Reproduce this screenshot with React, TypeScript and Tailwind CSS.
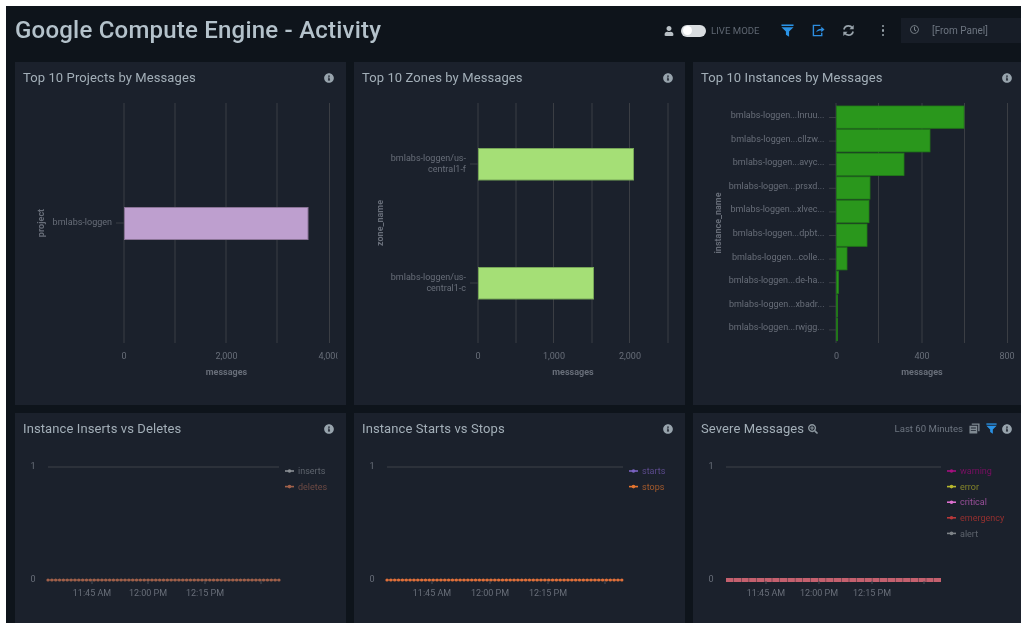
import React from "react";
import { FaInfoCircle, FaUser, FaSearchPlus, FaRegClock } from "react-icons/fa";

const LABEL = "#686e79";
const GRID = "#3b3e44";
const FONT = "Roboto, sans-serif";

function Info() {
  return <FaInfoCircle className="h-[10px] w-[10px] text-[#98a4ad]" />;
}

function Funnel({ className }: { className: string }) {
  return (
    <svg viewBox="0 0 14 14" className={className} fill="currentColor">
      <path d="M0.5 0.5H13.5V2.2H0.5Z" />
      <path d="M0.5 3.4H13.5L8.7 8.2V13.6L5.3 11.6V8.2Z" />
    </svg>
  );
}

function Panel({ title, right, children }: { title: React.ReactNode; right?: React.ReactNode; children: React.ReactNode }) {
  return (
    <div className="flex min-w-0 flex-col overflow-hidden bg-[#1b212c]">
      <div className="flex h-[32px] shrink-0 items-center justify-between pl-[8px] pr-[12px]">
        <div className="flex items-center text-[13px] tracking-[0.1px] text-[#a3afb8]">{title}</div>
        {right ?? <Info />}
      </div>
      {children}
    </div>
  );
}

type Box = { x: number; y: number; w: number; h: number };

function Chart({ box, children }: { box: Box; children: React.ReactNode }) {
  return (
    <svg
      width={box.w}
      height={box.h}
      viewBox={`${box.x} ${box.y} ${box.w} ${box.h}`}
      className="block shrink-0"
      style={{ fontFamily: FONT }}
    >
      {children}
    </svg>
  );
}

function Grid({ xs }: { xs: number[] }) {
  return (
    <>
      {xs.map((x) => (
        <line key={x} x1={x} x2={x} y1={103} y2={343} stroke={GRID} strokeWidth={1} />
      ))}
    </>
  );
}

function Tx({ x, y, anchor = "end", children, bold, fill = LABEL }: { x: number; y: number; anchor?: "start" | "middle" | "end"; children: React.ReactNode; bold?: boolean; fill?: string }) {
  return (
    <text x={x} y={y} textAnchor={anchor} fontSize={9} fontWeight={bold ? 700 : 400} fill={fill}>
      {children}
    </text>
  );
}

function YTitle({ x, y, children }: { x: number; y: number; children: React.ReactNode }) {
  return (
    <text transform={`translate(${x} ${y}) rotate(-90)`} textAnchor="middle" fontSize={9} fontWeight={700} fill={LABEL}>
      {children}
    </text>
  );
}

const INSTANCES: [string, number][] = [
  ["bmlabs-loggen...lnruu...", 964],
  ["bmlabs-loggen...cllzw...", 930],
  ["bmlabs-loggen...avyc...", 904],
  ["bmlabs-loggen...prsxd...", 870],
  ["bmlabs-loggen...xlvec...", 869],
  ["bmlabs-loggen...dpbt...", 867],
  ["bmlabs-loggen...colle...", 847],
  ["bmlabs-loggen...de-ha...", 838.5],
  ["bmlabs-loggen...xbadr...", 837.6],
  ["bmlabs-loggen...rwjgg...", 837.6],
];

function Projects() {
  return (
    <Chart box={{ x: 15, y: 94, w: 331, h: 311 }}>
      <defs>
        <clipPath id="clipProjects">
          <rect x={15} y={94} width={322.5} height={311} />
        </clipPath>
      </defs>
      <Grid xs={[124, 175, 226, 277, 329.5]} />
      <rect x={124.5} y={207.5} width={183.5} height={32} fill="#be9fcf" stroke="#8a7396" />
      <line x1={116} x2={124} y1={223} y2={223} stroke={GRID} />
      <Tx x={112} y={225}>bmlabs-loggen</Tx>
      <YTitle x={44} y={223}>project</YTitle>
      <Tx x={124} y={358.5} anchor="middle">0</Tx>
      <Tx x={226.5} y={358.5} anchor="middle">2,000</Tx>
      <g clipPath="url(#clipProjects)">
        <Tx x={329.5} y={358.5} anchor="middle">4,000</Tx>
      </g>
      <Tx x={226.5} y={375} anchor="middle" bold>messages</Tx>
    </Chart>
  );
}

function Zones() {
  return (
    <Chart box={{ x: 354, y: 94, w: 331, h: 311 }}>
      <Grid xs={[478, 516, 553.5, 592, 629.5, 668]} />
      <rect x={478.5} y={148.5} width={155} height={31.5} fill="#a5df76" stroke="#76a558" />
      <rect x={478.5} y={267.5} width={115} height={31.5} fill="#a5df76" stroke="#76a558" />
      <line x1={470} x2={478} y1={164} y2={164} stroke={GRID} />
      <line x1={470} x2={478} y1={283} y2={283} stroke={GRID} />
      <Tx x={466} y={161}>bmlabs-loggen/us-</Tx>
      <Tx x={466} y={171.5}>central1-f</Tx>
      <Tx x={466} y={279.5}>bmlabs-loggen/us-</Tx>
      <Tx x={466} y={290.5}>central1-c</Tx>
      <YTitle x={383} y={223}>zone_name</YTitle>
      <Tx x={478} y={358.5} anchor="middle">0</Tx>
      <Tx x={554} y={358.5} anchor="middle">1,000</Tx>
      <Tx x={630} y={358.5} anchor="middle">2,000</Tx>
      <Tx x={573} y={375} anchor="middle" bold>messages</Tx>
    </Chart>
  );
}

function Instances() {
  return (
    <Chart box={{ x: 693, y: 94, w: 331, h: 311 }}>
      <Grid xs={[836, 878.5, 922, 964.5, 1007.5]} />
      {INSTANCES.map(([name, end], i) => {
        const y = 106 + i * 23.6;
        return (
          <g key={name}>
            <rect x={836.5} y={y} width={end - 836.5} height={22.3} fill="#2a971c" stroke="#217a18" strokeWidth={0.8} />
            <line x1={829} x2={836} y1={y + 11.5} y2={y + 11.5} stroke={GRID} />
            <Tx x={824.5} y={y + 12}>{name}</Tx>
          </g>
        );
      })}
      <YTitle x={721} y={223}>instance_name</YTitle>
      <Tx x={836.5} y={358.5} anchor="middle">0</Tx>
      <Tx x={922} y={358.5} anchor="middle">400</Tx>
      <Tx x={1007} y={358.5} anchor="middle">800</Tx>
      <Tx x={922} y={375} anchor="middle" bold>messages</Tx>
    </Chart>
  );
}

type Legend = { name: string; text: string; mark: string };

function Timeline({
  box, x1, x2, oneX, ticks, legendX, legend, series,
}: {
  box: Box; x1: number; x2: number; oneX: number; ticks: number[]; legendX: number; legend: Legend[]; series: React.ReactNode;
}) {
  return (
    <Chart box={box}>
      <line x1={x1} x2={x2} y1={467} y2={467} stroke="#3f4349" />
      <Tx x={oneX} y={468.5} anchor="middle">1</Tx>
      <Tx x={oneX} y={581.5} anchor="middle">0</Tx>
      {series}
      {ticks.map((t) => (
        <line key={t} x1={t} x2={t} y1={581} y2={584} stroke="#4c5058" />
      ))}
      {["11:45 AM", "12:00 PM", "12:15 PM"].map((t, i) => (
        <Tx key={t} x={ticks[i]} y={595.5} anchor="middle">{t}</Tx>
      ))}
      {legend.map((l, i) => {
        const y = 471 + i * 15.6;
        return (
          <g key={l.name}>
            <line x1={legendX} x2={legendX + 9} y1={y} y2={y} stroke={l.mark} strokeWidth={1.6} />
            <circle cx={legendX + 4.5} cy={y} r={1.8} fill={l.mark} />
            <Tx x={legendX + 13} y={y + 3.2} anchor="start" fill={l.text}>{l.name}</Tx>
          </g>
        );
      })}
    </Chart>
  );
}

function Dots({ x1, x2, color, step = 3.85 }: { x1: number; x2: number; color: string; step?: number }) {
  const n = Math.floor((x2 - x1) / step);
  return (
    <g>
      <line x1={x1} x2={x2} y1={580} y2={580} stroke={color} strokeWidth={1.2} />
      {Array.from({ length: n + 1 }, (_, i) => (
        <circle key={i} cx={x1 + i * step} cy={580} r={1.6} fill={color} />
      ))}
    </g>
  );
}

export default function App() {
  return (
    <div className="h-[626px] w-[1024px] overflow-hidden bg-white pl-[6px] pt-[6px]">
      <div
        className="h-[617px] w-[1015px] overflow-hidden bg-[#0e141b] blur-[0.6px]"
        style={{ fontFamily: FONT }}
      >
        <header className="flex h-[56px] items-center pb-[7px] pl-[9px]">
          <h1 className="-mt-[1px] text-[24px] font-medium tracking-[0.22px] text-[#b4c2cb]">Google Compute Engine - Activity</h1>
          <div className="ml-auto flex items-center">
            <FaUser className="h-[10px] w-[10px] text-[#b9c1c6]" />
            <div className="ml-[7px] flex h-[12px] w-[25px] items-center rounded-full bg-[#d9dde0] pl-[2px]">
              <div className="h-[9px] w-[9px] rounded-full bg-white" />
            </div>
            <span className="ml-[5px] mt-[1px] text-[9.6px] text-[#5f6772]">LIVE MODE</span>
            <Funnel className="ml-[21px] h-[13px] w-[13px] text-[#2a93e6]" />
            <svg viewBox="0 0 14 14" className="ml-[18px] h-[13px] w-[13px] text-[#2d8ee0]" fill="none" stroke="currentColor" strokeWidth={1.5}>
              <path d="M9 1.5H1.5V12.5H10.5V9.5" />
              <path d="M4.5 9C5 6.2 7 5 10 5V3L13.5 6L10 9V7C7.8 7 6 7.5 4.5 9Z" fill="currentColor" stroke="none" />
            </svg>
            <svg viewBox="0 0 14 14" className="ml-[17px] h-[13px] w-[13px] text-[#98a3ab]" fill="none" stroke="currentColor" strokeWidth={1.8}>
              <path d="M2 6C2.6 3.6 4.6 2 7 2C8.7 2 10.2 2.8 11.2 4.2" />
              <path d="M12 8C11.4 10.4 9.4 12 7 12C5.3 12 3.8 11.2 2.8 9.8" />
              <path d="M12.6 1V5.6H8Z" fill="currentColor" stroke="none" />
              <path d="M1.4 13V8.4H6Z" fill="currentColor" stroke="none" />
            </svg>
            <div className="ml-[27px] flex flex-col gap-[2px]">
              <div className="h-[2.5px] w-[2.5px] rounded-full bg-[#98a3ab]" />
              <div className="h-[2.5px] w-[2.5px] rounded-full bg-[#98a3ab]" />
              <div className="h-[2.5px] w-[2.5px] rounded-full bg-[#98a3ab]" />
            </div>
            <div className="ml-[17px] flex h-[25px] w-[120px] items-center bg-[#171d27] pl-[9px]">
              <FaRegClock className="-mt-[2px] h-[9px] w-[9px] text-[#7c858d]" />
              <span className="ml-[13px] text-[10px] text-[#6d7580]">[From Panel]</span>
            </div>
          </div>
        </header>

        <main className="grid h-[561px] grid-cols-[331px_331px_331px] grid-rows-[343px_210px] gap-[8px] pl-[9px]">
          <Panel title="Top 10 Projects by Messages"><Projects /></Panel>
          <Panel title="Top 10 Zones by Messages"><Zones /></Panel>
          <Panel title="Top 10 Instances by Messages"><Instances /></Panel>

          <Panel title="Instance Inserts vs Deletes">
            <Timeline
              box={{ x: 15, y: 445, w: 331, h: 178 }}
              x1={48} x2={279} oneX={33} ticks={[92, 148, 205, 261]} legendX={285}
              legend={[
                { name: "inserts", text: "#5e646d", mark: "#8a8f94" },
                { name: "deletes", text: "#6d4a44", mark: "#a0604a" },
              ]}
              series={<Dots x1={48} x2={279} color="#a0604a" />}
            />
          </Panel>
          <Panel title="Instance Starts vs Stops">
            <Timeline
              box={{ x: 354, y: 445, w: 331, h: 178 }}
              x1={387} x2={623} oneX={372} ticks={[432, 490, 548, 605]} legendX={629}
              legend={[
                { name: "starts", text: "#5b4a8c", mark: "#7a62c0" },
                { name: "stops", text: "#a45a2c", mark: "#e5752f" },
              ]}
              series={<Dots x1={387} x2={623} color="#e0703a" />}
            />
          </Panel>
          <Panel
            title={
              <>
                Severe Messages
                <FaSearchPlus className="ml-[4px] h-[10px] w-[10px] text-[#8b969e]" />
              </>
            }
            right={
              <div className="flex items-center">
                <span className="text-[9.6px] text-[#6d7580]">Last 60 Minutes</span>
                <svg viewBox="0 0 12 12" className="ml-[6px] h-[11px] w-[11px] text-[#808a92]" fill="currentColor">
                  <path d="M3 0.5H11.5V9H10V2H3Z" />
                  <path d="M0.5 3H9V11.5H0.5ZM2 5V6H7.5V5ZM2 7.5V8.5H7.5V7.5Z" fillRule="evenodd" />
                </svg>
                <Funnel className="ml-[6px] h-[11px] w-[11px] text-[#2a93e6]" />
                <div className="ml-[5px]"><Info /></div>
              </div>
            }
          >
            <Timeline
              box={{ x: 693, y: 445, w: 331, h: 178 }}
              x1={726} x2={941} oneX={711} ticks={[766, 819, 872, 924]} legendX={947}
              legend={[
                { name: "warning", text: "#7a0f63", mark: "#a5107f" },
                { name: "error", text: "#85852a", mark: "#b8b82e" },
                { name: "critical", text: "#9a4f9a", mark: "#dd70cf" },
                { name: "emergency", text: "#96302f", mark: "#b8383a" },
                { name: "alert", text: "#5e646d", mark: "#7e8388" },
              ]}
              series={<line x1={726} x2={941} y1={580} y2={580} stroke="#c4606e" strokeWidth={4} strokeDasharray="7.3 0.4" />}
            />
          </Panel>
        </main>
      </div>
    </div>
  );
}
